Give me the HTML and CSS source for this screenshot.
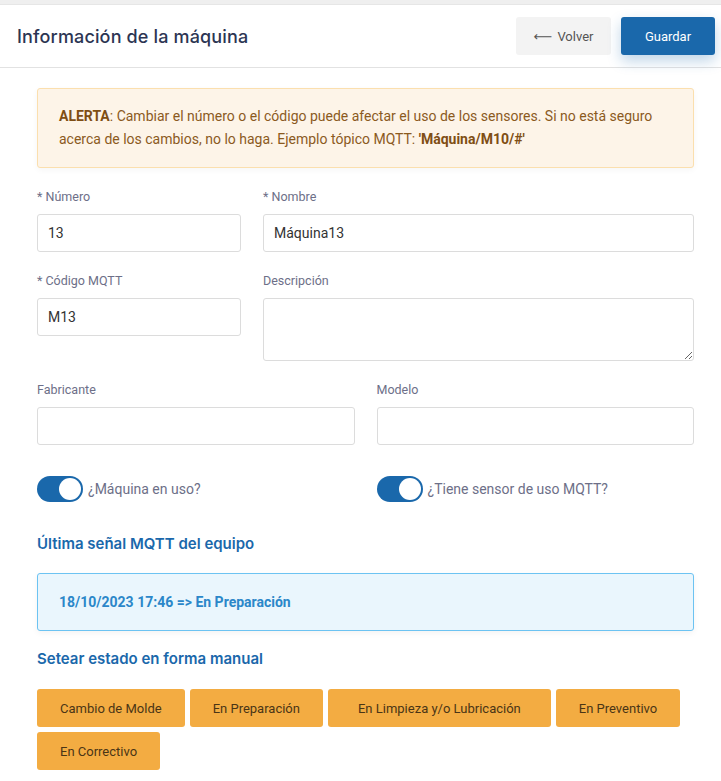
FILE: index.html
```html
<!DOCTYPE html>
<html lang="es">
<head>
<meta charset="utf-8">
<title>Información de la máquina</title>
<link rel="stylesheet" href="styles.css">
</head>
<body>
<div class="topstrip"></div>
<header class="header">
  <h1 class="title">Información de la máquina</h1>
  <div class="actions">
    <button class="btn btn-light"><span class="arrow">⟵</span> Volver</button>
    <button class="btn btn-primary">Guardar</button>
  </div>
</header>
<main class="content">
  <div class="alert">
    <strong>ALERTA</strong>: Cambiar el número o el código puede afectar el uso de los sensores. Si no está seguro acerca de los cambios, no lo haga. Ejemplo tópico MQTT: <strong>'Máquina/M10/#'</strong>
  </div>

  <div class="grid grid-4-8">
    <div class="field">
      <label class="label">* Número</label>
      <input class="input" type="text" value="13">
    </div>
    <div class="field">
      <label class="label">* Nombre</label>
      <input class="input" type="text" value="Máquina13">
    </div>
  </div>

  <div class="grid grid-4-8">
    <div class="field">
      <label class="label">* Código MQTT</label>
      <input class="input" type="text" value="M13">
    </div>
    <div class="field">
      <label class="label">Descripción</label>
      <textarea class="input textarea"></textarea>
    </div>
  </div>

  <div class="grid grid-6-6">
    <div class="field">
      <label class="label">Fabricante</label>
      <input class="input" type="text" value="">
    </div>
    <div class="field">
      <label class="label">Modelo</label>
      <input class="input" type="text" value="">
    </div>
  </div>

  <div class="grid grid-6-6 toggles">
    <label class="switch-row"><span class="switch"><span class="knob"></span></span><span class="switch-label">¿Máquina en uso?</span></label>
    <label class="switch-row"><span class="switch"><span class="knob"></span></span><span class="switch-label">¿Tiene sensor de uso MQTT?</span></label>
  </div>

  <h2 class="section-title">Última señal MQTT del equipo</h2>
  <div class="info">18/10/2023 17:46 =&gt; En Preparación</div>

  <h2 class="section-title manual">Setear estado en forma manual</h2>
  <div class="states">
    <button class="state">Cambio de Molde</button>
    <button class="state">En Preparación</button>
    <button class="state state-wide">En Limpieza y/o Lubricación</button>
    <button class="state">En Preventivo</button>
    <button class="state">En Correctivo</button>
  </div>
</main>
</body>
</html>
```

FILE: styles.css
```css
* { box-sizing: border-box; }

body {
  margin: 0;
  background: #ffffff;
  font-family: Roboto, "Liberation Sans", Arial, sans-serif;
  font-size: 14px;
  color: #333;
}

.topstrip {
  height: 5px;
  background: #efefef;
  border-bottom: 1px solid #e6e6e6;
}

.header {
  height: 63px;
  display: flex;
  align-items: center;
  justify-content: space-between;
  padding: 0 6px 0 17px;
  border-bottom: 1px solid #e2e2e2;
}

.title {
  margin: 0;
  font-family: Inter, "Open Sans", sans-serif;
  font-size: 18px;
  font-weight: 500;
  color: #2c3553;
  letter-spacing: 0.15px;
}

.actions {
  display: flex;
  gap: 10px;
}

.btn {
  height: 38px;
  border: none;
  border-radius: 3px;
  font-family: Roboto, "Liberation Sans", sans-serif;
  font-size: 13px;
  cursor: pointer;
}

.btn-light {
  width: 95px;
  background: #f3f3f3;
  color: #555;
}

.arrow {
  font-family: "DejaVu Sans", sans-serif;
  font-size: 13px;
  margin-right: 2px;
}

.btn-primary {
  width: 94px;
  background: #1a68ab;
  color: #fff;
  box-shadow: 0 6px 14px rgba(26, 104, 171, 0.28);
}

.content {
  padding: 20px 27px 0 37px;
}

.alert {
  background: #fdf4e8;
  border: 1px solid #fbdfae;
  border-radius: 3px;
  padding: 16px 21px;
  line-height: 23px;
  font-size: 14px;
  color: #8b5a1e;
  box-shadow: 0 2px 6px rgba(0,0,0,0.04);
}

.alert strong {
  color: #7f4e14;
  font-weight: 700;
}

.grid {
  display: grid;
  column-gap: 22px;
  margin-top: 21px;
}

.grid-4-8 { grid-template-columns: 204px 1fr; }
.grid-6-6 { grid-template-columns: 1fr 1fr; }

.field {
  display: flex;
  flex-direction: column;
}

.label {
  font-size: 12.5px;
  line-height: 16px;
  color: #6d6f88;
  margin-bottom: 9px;
}

.input {
  height: 38px;
  border: 1px solid #dcdcdc;
  border-radius: 3px;
  padding: 0 10px;
  font-family: Roboto, "Liberation Sans", sans-serif;
  font-size: 14px;
  color: #333;
  background: #fff;
  outline: none;
}

.textarea {
  height: 63px;
  resize: vertical;
}

.toggles {
  margin-top: 31px;
}

.switch-row {
  display: flex;
  align-items: center;
  gap: 5px;
}

.switch {
  width: 46px;
  height: 26px;
  border-radius: 13px;
  background: #1a68ab;
  display: flex;
  align-items: center;
  justify-content: flex-end;
  padding: 0 2px;
}

.knob {
  width: 22px;
  height: 22px;
  border-radius: 50%;
  background: #fff;
}

.switch-label {
  font-size: 14px;
  color: #6d6f88;
}

.section-title {
  margin: 33px 0 0;
  font-family: Inter, "Open Sans", sans-serif;
  font-size: 15px;
  line-height: 18px;
  font-weight: 600;
  color: #1a68ab;
}

.info {
  margin-top: 20px;
  height: 58px;
  display: flex;
  align-items: center;
  padding: 0 21px;
  background: #eaf6fd;
  border: 1px solid #6cc3f2;
  border-radius: 3px;
  font-weight: 700;
  font-size: 14px;
  color: #2b87c9;
  box-shadow: 0 2px 6px rgba(0,0,0,0.05);
}

.section-title.manual {
  margin-top: 19px;
}

.states {
  margin-top: 21px;
  display: flex;
  flex-wrap: wrap;
  gap: 5px 5px;
}

.state {
  height: 38px;
  padding: 0 23px;
  border: none;
  border-radius: 3px;
  background: #f3ac42;
  color: #4a3516;
  font-family: Roboto, "Liberation Sans", sans-serif;
  font-size: 13px;
  cursor: pointer;
}

.state-wide {
  padding: 0 30px;
}
```
